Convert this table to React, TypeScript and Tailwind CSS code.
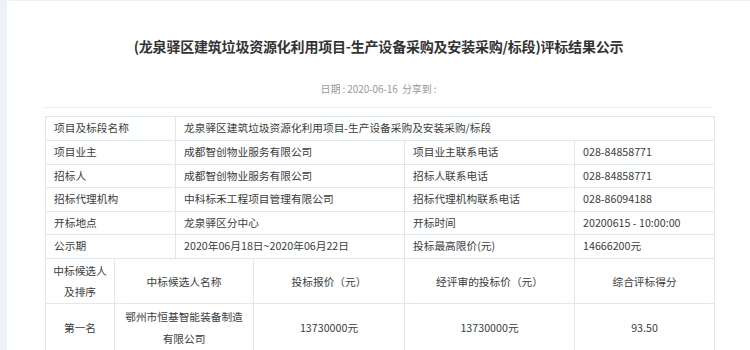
import React from "react";

const font = { fontFamily: '"Noto Sans CJK SC", "Noto Sans", sans-serif' };

const td = "border border-[#e2e7ee] px-[8px] align-middle";

export default function App() {
  return (
    <div className="w-[750px] h-[350px] overflow-hidden bg-[#eef1f5] pt-px pl-[7px]" style={font}>
      <div className="bg-white h-full">
        <h1 className="pt-[34px] text-center text-[14px] leading-[22px] font-bold text-[#333] tracking-[-0.2px]">
          (龙泉驿区建筑垃圾资源化利用项目-生产设备采购及安装采购/标段)评标结果公示
        </h1>
        <div className="mt-[25px] text-center text-[10px] leading-[14px] text-[#999] tracking-[-0.1px]">
          日期 : 2020-06-16&nbsp;&nbsp;分享到 :
        </div>
        <div className="mx-[38px] mt-[11px] border-t border-[#e8ebef]" />
        <div className="mx-[38px] mt-[8px]">
          <table className="w-[669px] border-collapse text-[10.7px] text-[#3c3c3c] table-fixed">
            <colgroup>
              <col className="w-[69px]" />
              <col className="w-[61px]" />
              <col className="w-[78px]" />
              <col className="w-[151px]" />
              <col className="w-[170px]" />
              <col className="w-[140px]" />
            </colgroup>
            <tbody>
              <tr className="h-[24px]">
                <td className={td} colSpan={2}>项目及标段名称</td>
                <td className={td} colSpan={4}>龙泉驿区建筑垃圾资源化利用项目-生产设备采购及安装采购/标段</td>
              </tr>
              <tr className="h-[23.5px]">
                <td className={td} colSpan={2}>项目业主</td>
                <td className={td} colSpan={2}>成都智创物业服务有限公司</td>
                <td className={td}>项目业主联系电话</td>
                <td className={td + " whitespace-nowrap"}>028-84858771</td>
              </tr>
              <tr className="h-[23.5px]">
                <td className={td} colSpan={2}>招标人</td>
                <td className={td} colSpan={2}>成都智创物业服务有限公司</td>
                <td className={td}>招标人联系电话</td>
                <td className={td + " whitespace-nowrap"}>028-84858771</td>
              </tr>
              <tr className="h-[23.5px]">
                <td className={td} colSpan={2}>招标代理机构</td>
                <td className={td} colSpan={2}>中科标禾工程项目管理有限公司</td>
                <td className={td}>招标代理机构联系电话</td>
                <td className={td + " whitespace-nowrap"}>028-86094188</td>
              </tr>
              <tr className="h-[23.5px]">
                <td className={td} colSpan={2}>开标地点</td>
                <td className={td} colSpan={2}>龙泉驿区分中心</td>
                <td className={td}>开标时间</td>
                <td className={td + " whitespace-nowrap"}>20200615 - 10:00:00</td>
              </tr>
              <tr className="h-[24px]">
                <td className={td} colSpan={2}>公示期</td>
                <td className={td} colSpan={2}>2020年06月18日~2020年06月22日</td>
                <td className={td}>投标最高限价(元)</td>
                <td className={td + " whitespace-nowrap"}>14666200元</td>
              </tr>
              <tr className="h-[45px] text-center leading-[21px]">
                <td className="border border-[#e2e7ee] px-[2px] align-middle">中标候选人<br />及排序</td>
                <td className={td} colSpan={2}>中标候选人名称</td>
                <td className={td}>投标报价（元）</td>
                <td className={td}>经评审的投标价（元）</td>
                <td className={td}>综合评标得分</td>
              </tr>
              <tr className="h-[49px] text-center leading-[22px]">
                <td className={td}>第一名</td>
                <td className="border border-[#e2e7ee] px-[4px] align-middle" colSpan={2}>鄂州市恒基智能装备制造<br />有限公司</td>
                <td className={td}>13730000元</td>
                <td className={td}>13730000元</td>
                <td className={td}>93.50</td>
              </tr>
            </tbody>
          </table>
        </div>
      </div>
    </div>
  );
}
